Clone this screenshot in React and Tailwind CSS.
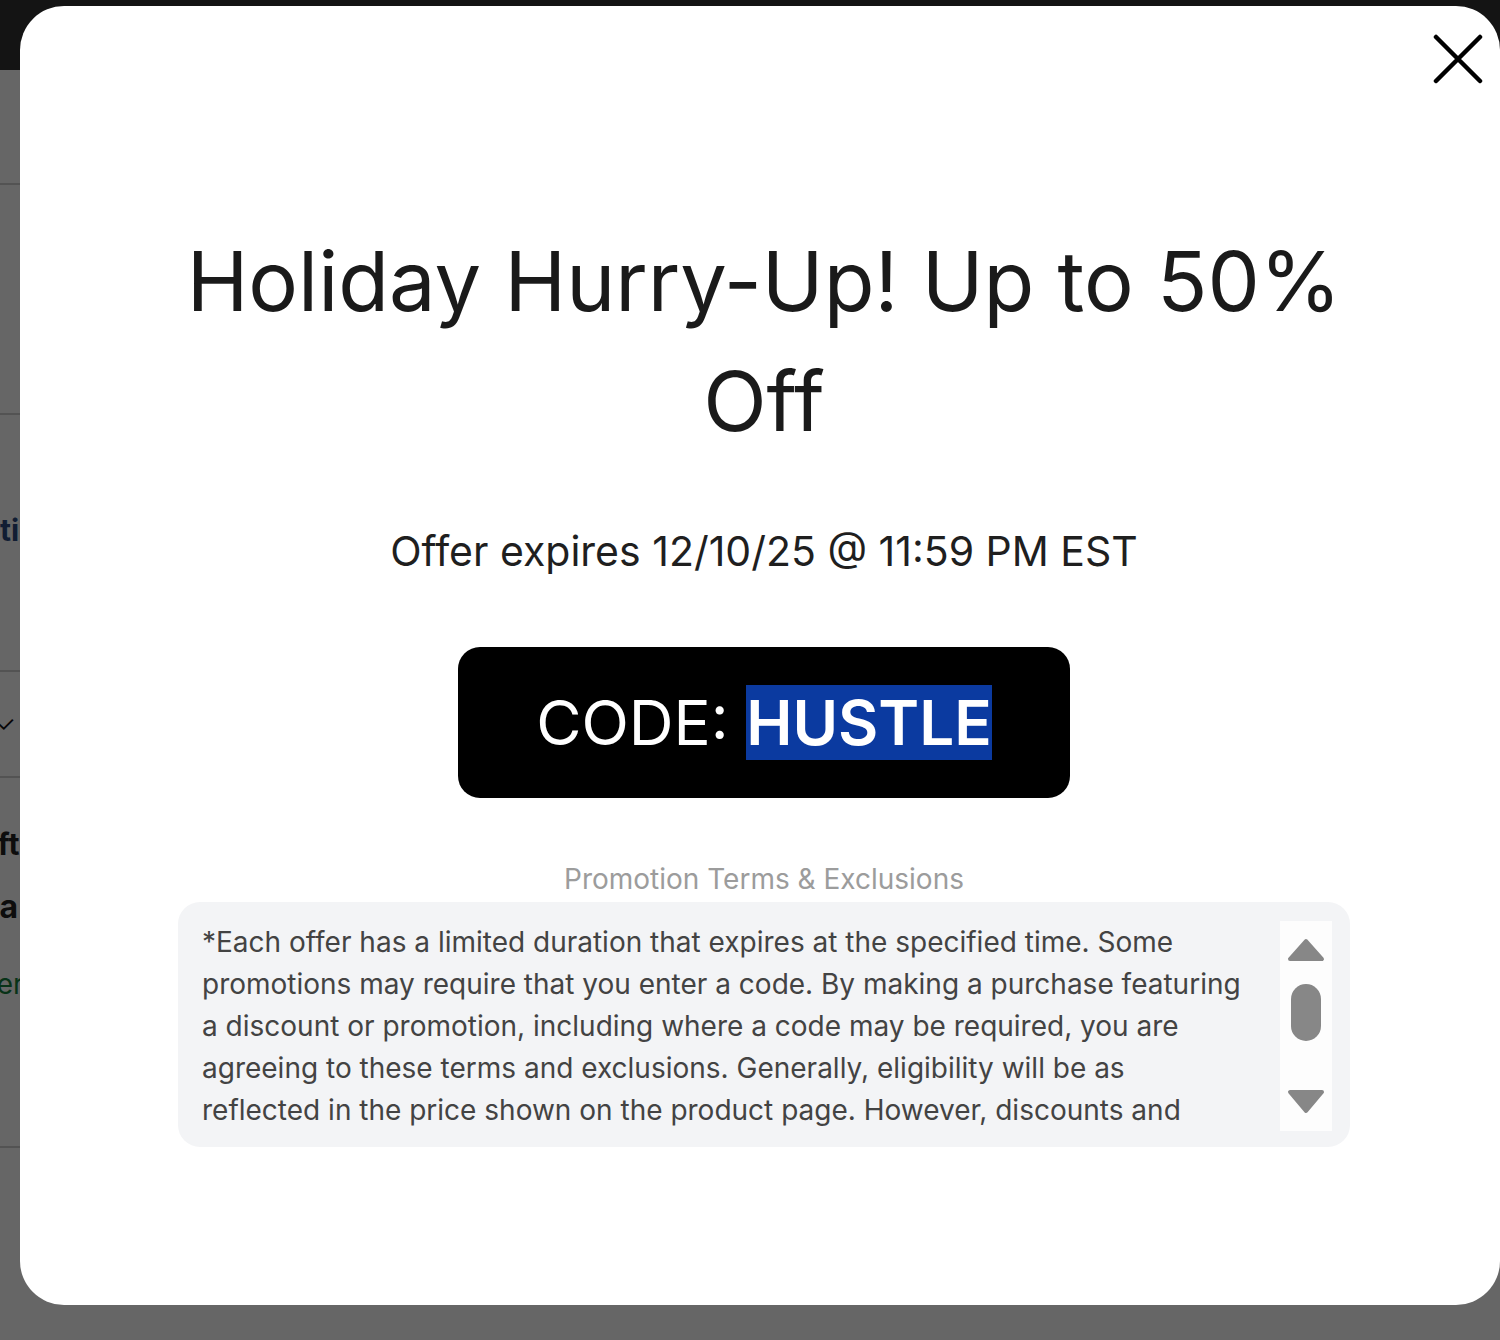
import { useState } from "react";

const TERMS =
  "*Each offer has a limited duration that expires at the specified time. Some promotions may require that you enter a code. By making a purchase featuring a discount or promotion, including where a code may be required, you are agreeing to these terms and exclusions. Generally, eligibility will be as reflected in the price shown on the product page. However, discounts and promotions may not apply to certain products, bundles or previously discounted items, and may not be combined with other offers unless stated otherwise.";

const CloseIcon = () => (
  <svg width="50" height="50" viewBox="0 0 50 50" fill="none">
    <path d="M3 3L47 47M47 3L3 47" stroke="#000" strokeWidth="4.5" strokeLinecap="round" />
  </svg>
);

// little scroll track drawn beside the terms text
const ScrollTrack = () => (
  <div className="w-[52px] shrink-0 bg-[#fdfdfd] flex flex-col items-center pt-[17px] pb-[16px]">
    <svg width="38" height="24" viewBox="0 0 38 24">
      <path d="M19 3L35 21H3Z" fill="#878787" stroke="#878787" strokeWidth="4" strokeLinejoin="round" />
    </svg>
    <div className="mt-[22px] w-[30px] h-[57px] rounded-full bg-[#878787]" />
    <div className="flex-1" />
    <svg width="38" height="26" viewBox="0 0 38 26">
      <path d="M3 3H35L19 22Z" fill="#878787" stroke="#878787" strokeWidth="4" strokeLinejoin="round" />
    </svg>
  </div>
);

const PromoModal = ({ onClose }) => (
  <div className="absolute left-[20px] top-[6px] w-[1480px] h-[1299px] bg-white rounded-[44px] font-['Inter',sans-serif]">
    <button onClick={onClose} className="absolute right-[17px] top-[28px]" aria-label="Close">
      <CloseIcon />
    </button>

    <div className="flex flex-col items-center pt-[215px] pl-[158px] pr-[150px]">
      <h1 className="text-[83px] leading-[120px] text-[#1a1a1a] text-center font-normal">
        Holiday Hurry-Up! Up to 50% Off
      </h1>

      <p className="mt-[60px] text-[41px] text-[#1f1f1f]">Offer expires 12/10/25 @ 11:59 PM EST</p>

      <div className="mt-[64px] w-[612px] h-[151px] rounded-[22px] bg-black flex items-center justify-center">
        <span className="text-[62px] text-white">
          CODE: <span className="font-semibold bg-[#0b3aa0]">HUSTLE</span>
        </span>
      </div>

      <p className="mt-[60px] text-[28px] text-[#9c9c9c]">Promotion Terms &amp; Exclusions</p>

      <div className="mt-[2px] w-full bg-[#f3f4f6] rounded-[22px] pl-[24px] pr-[18px] pt-[19px] pb-[16px]">
        <div className="h-[210px] flex gap-[34px] overflow-hidden">
          <p className="flex-1 text-[28px] leading-[42px] text-[#434343]">{TERMS}</p>
          <ScrollTrack />
        </div>
      </div>
    </div>
  </div>
);

export default function App() {
  const [open, setOpen] = useState(true);

  return (
    <div className="relative w-[1500px] h-[1340px] overflow-hidden bg-white font-['Inter',sans-serif]">
      {/* page underneath */}
      <div className="h-[70px] bg-[#333]" />
      <div className="h-[115px] border-b-2 border-[#cfcfcf]" />
      <div className="h-[230px] border-b-2 border-[#cfcfcf]" />
      <div className="h-[257px] border-b-2 border-[#cfcfcf] flex items-center pb-[24px]">
        <span className="-ml-[42px] text-[30px] font-bold text-[#2b4a80]">Options</span>
      </div>
      <div className="h-[106px] border-b-2 border-[#cfcfcf] flex items-center">
        <span className="-ml-[4px] text-[22px] text-[#111]">✓</span>
      </div>
      <div className="h-[370px] border-b-2 border-[#cfcfcf] flex flex-col pt-[44px] gap-[16px]">
        <span className="-ml-[33px] text-[30px] font-bold text-[#222]">Gift</span>
        <span className="-ml-[54px] text-[32px] font-bold text-[#222]">Data</span>
        <span className="mt-[16px] -ml-[52px] text-[28px] text-[#15803d]">Order</span>
      </div>

      {open && (
        <>
          <div className="absolute inset-0 bg-black/60" />
          <PromoModal onClose={() => setOpen(false)} />
        </>
      )}
    </div>
  );
}
